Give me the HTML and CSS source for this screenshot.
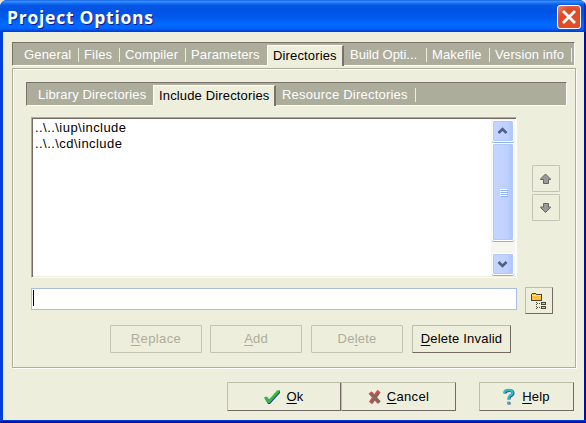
FILE: index.html
```html
<!DOCTYPE html>
<html lang="en">
<head>
<meta charset="utf-8">
<title>Project Options</title>
<link rel="stylesheet" href="styles.css">
</head>
<body>
<div class="window">
  <header class="titlebar">
    <h1>Project Options</h1>
    <button class="close" aria-label="Close"><svg width="22" height="22" viewBox="0 0 22 22"><path d="M6 6L16 16M16 6L6 16" stroke="#fff" stroke-width="2.800" stroke-linecap="square"/></svg></button>
  </header>
  <main class="body">
    <nav class="tabs main-tabs">
      <span class="tab">General</span><span class="tab">Files</span><span class="tab">Compiler</span><span class="tab before">Parameters</span><span class="tab active">Directories</span><span class="tab build">Build Opti...</span><span class="tab">Makefile</span><span class="tab version">Version info</span>
    </nav>
    <section class="page">
      <nav class="tabs sub-tabs">
        <span class="tab lib">Library Directories</span><span class="tab active inc">Include Directories</span><span class="tab res">Resource Directories</span>
      </nav>
      <div class="list-row">
        <div class="list">
          <div class="items"><div>..\..\iup\include</div><div>..\..\cd\include</div></div>
          <div class="scroll">
            <div class="sb"><svg width="20" height="20" viewBox="0 0 20 20"><path d="M5.500 12L9.500 8L13.500 12" fill="none" stroke="#4d6185" stroke-width="2.600"/></svg></div>
            <div class="thumb"><i></i><i></i><i></i><i></i></div>
            <div class="track"></div>
            <div class="sb"><svg width="20" height="20" viewBox="0 0 20 20"><path d="M5.500 8L9.500 12L13.500 8" fill="none" stroke="#4d6185" stroke-width="2.600"/></svg></div>
          </div>
        </div>
        <div class="movers">
          <button class="btn disabled mover"><svg width="12" height="12" viewBox="0 0 12 12"><path d="M5.500 1L10.500 6V6.500H8.500V10.500H3.500V6.500H.5V6Z" fill="#999" stroke="#666"/></svg></button>
          <button class="btn disabled mover"><svg width="12" height="12" viewBox="0 0 12 12"><path d="M5.500 10.500L.5 5.500V5H3.500V1.500H8.500V5H10.500V5.500Z" fill="#999" stroke="#666"/></svg></button>
        </div>
      </div>
      <div class="edit-row">
        <div class="edit"><span class="caret"></span></div>
        <button class="btn browse"><svg width="16" height="16" viewBox="0 0 16 16" shape-rendering="crispEdges"><path d="M1 0H5V1H11V8H0V1H1Z" fill="#4d4538"/><path d="M1 1H5V2H10V7H1Z" fill="#ffc23e"/><path d="M1 2H10V3H1Z" fill="#ffdc83"/><path d="M5.500 9V16M6 10.500H10M6 14.500H10" fill="none" stroke="#4d4538" stroke-dasharray="1 1"/><path d="M10 9H15V12H10ZM10 13H15V16H10Z" fill="#4d4538"/><path d="M11 10H14V11H11ZM11 14H14V15H11Z" fill="#ffc23e"/></svg></button>
      </div>
      <div class="actions">
        <button class="btn disabled replace"><span><u>R</u>eplace</span></button>
        <button class="btn disabled add"><span><u>A</u>dd</span></button>
        <button class="btn disabled delete"><span>De<u>l</u>ete</span></button>
        <button class="btn invalid"><span><u>D</u>elete Invalid</span></button>
      </div>
    </section>
    <footer class="footer">
      <button class="btn ok"><svg width="16" height="16" viewBox="0 0 16 16"><path d="M.5 9L3 8L5.500 11L13 2.500L16 1.500V4L6 15H4Z" fill="#3432a4"/><path d="M0 8.500L2.500 7.500L5 10.500L13 1.500L15.500 1V3L5.500 14H4Z" fill="#32bd3b"/></svg><span><u>O</u>k</span></button>
      <button class="btn cancel"><svg width="14" height="16" viewBox="0 0 14 16"><path d="M2 3.500L11 13.500M11 2L2.500 14" stroke="#d9504b" stroke-width="4"/><path d="M3 4L11.500 13.500M10.500 4L3.500 13.500" stroke="#846760" stroke-width="2.800"/></svg><span><u>C</u>ancel</span></button>
      <button class="btn help"><svg width="12" height="17" viewBox="0 0 12 17"><path d="M2 5.500Q2 2.500 6 2.500Q10 2.500 10 5Q10 7 7.500 8Q6 9 6 11.500M6 14V16.500" fill="none" stroke="#41399d" stroke-width="3"/><path d="M1.500 5Q1.500 2 5.500 2Q9.500 2 9.500 4.500Q9.500 6.500 7 7.500Q5.500 8.500 5.500 11.500M5.500 13.500V16" fill="none" stroke="#2abebd" stroke-width="2.400"/></svg><span><u>H</u>elp</span></button>
    </footer>
  </main>
</div>
</body>
</html>
```
FILE: styles.css
```css
* { box-sizing: border-box; }
body { margin: 0; background: #ece9d8; font: 13px/16px "Liberation Sans", Arial, sans-serif; color: #000; }
h1 { margin: 0; }
button { padding: 0; font: inherit; color: inherit; }
svg { display: block; flex: none; }
.window { width: 586px; height: 423px; background: #003fdc; border-radius: 7px 7px 0 0; overflow: hidden; display: flex; flex-direction: column; box-shadow: inset 0 -2px #00129c; }
.titlebar { height: 32px; flex: none; display: flex; justify-content: space-between; padding: 5px 5px 0 7px; background: linear-gradient(#0650da 0, #3b96ff 1px, #1b75f4 3px, #0758e5 5px, #0053e3 10px, #0057ea 16px, #0067ff 23px, #0068ff 28px, #0050e8 30px, #003bd0 32px); box-shadow: inset -2px 0 #0030c4; }
.titlebar h1 { font: bold 17.5px/24px "Open Sans", "Noto Sans", sans-serif; letter-spacing: .75px; color: #fff; text-shadow: 1px 1px #0a1d8c; white-space: nowrap; }
.close { width: 24px; height: 24px; border: 1px solid #fff; border-radius: 3px; background: radial-gradient(circle at 65% 70%, #e3502a, #dc4a27 60%, #e98973); display: flex; align-items: center; justify-content: center; }
.body { height: 388px; margin: 0 2px 0 3px; padding: 10px 8px 0 9px; background: #eeeedd; border-right: 0; box-shadow: 1px 0 #00129c, 2px 0 #00129c; }
.tabs { display: grid; background: #adad9c; border: 1px solid; border-color: #7b716b #fff #fff #7b716b; color: #fff; }
.main-tabs { width: 563px; height: 24px; grid-template-columns: 66px 41px 66px 81px 77px 83px 63px 82px; }
.tab { position: relative; padding: 4px 0 0 12px; white-space: nowrap; letter-spacing: .15px; }
.main-tabs .tab { padding-left: 5px; }
.main-tabs .tab:first-child { padding-left: 11px; }
.main-tabs .build { padding-left: 6px; letter-spacing: 0; }
.main-tabs .version { letter-spacing: .1px; }
.tab:not(.active):not(.before):not(.lib)::after { content: ""; position: absolute; right: 0; top: 5px; width: 1px; height: 14px; background: #eeeedd; }
.tabs .active { margin: 2px 0 -1px; padding: 2px 0 0 5px; background: #eeeedd; border: solid; border-width: 1px 2px 0 1px; border-color: #fff #7b716b #fff #fff; color: #000; }
.page { width: 564px; height: 300px; margin-top: 2px; padding: 13px 7px 0 13px; border: 1px solid #adad9c; box-shadow: inset 1px 1px #fff, 1px 1px #fff; }
.sub-tabs { width: 541px; height: 24px; grid-template-columns: 126px 123px 140px; }
.sub-tabs .tab:first-child { padding-left: 11px; }
.sub-tabs .res { padding-left: 6px; letter-spacing: .22px; }
.list-row { display: flex; margin: 11px 0 0 5px; gap: 15px; }
.list { width: 486px; height: 161px; background: #fff; border: 1px solid; border-color: #adad9c #fff #fff #adad9c; display: flex; justify-content: space-between; box-shadow: inset 1px 1px #736963, inset 0 -1px #eeeedd; }
.items { padding: 2px 0 0 3px; letter-spacing: .45px; }
.scroll { width: 24px; height: 157px; margin: 1px 1px 0 0; padding-top: 1px; background: #f6f5ee; display: flex; flex-direction: column; align-items: center; }
.sb, .thumb { width: 22px; background: linear-gradient(90deg, #c5d5ff, #bfd1ff 70%, #a9c5f6); border: 1px solid #fff; box-shadow: inset 0 0 0 1px #b3c9f5, 0 1px #8cb0e8; border-radius: 2px; flex: none; }
.sb { height: 22px; display: flex; justify-content: center; align-items: center; }
.sb:last-child { margin-bottom: 1px; }
.thumb { height: 98px; margin-top: 1px; display: flex; flex-direction: column; justify-content: center; align-items: center; gap: 1px; }
.thumb i { width: 7px; height: 1px; background: #fff; box-shadow: 1px 1px #8cb0f8; }
.track { flex: 1; }
.movers { display: flex; flex-direction: column; gap: 2px; padding-top: 48px; }
.btn { background: #eeeedd; border: 1px solid; border-color: #bdbdad #736963 #736963 #bdbdad; border-radius: 1px; display: flex; align-items: center; justify-content: center; white-space: nowrap; flex: none; letter-spacing: .2px; }
.disabled { border-color: #c4c4b4; color: #adad9c; }
.mover { width: 28px; height: 27px; }
.edit-row { display: flex; gap: 8px; margin: 9px 0 0 5px; }
.edit { width: 486px; height: 22px; margin-top: 1px; border: 1px solid #a9bfe2; background: #fff; padding: 1px; }
.caret { display: block; width: 1px; height: 16px; background: #000; }
.browse { width: 28px; height: 27px; }
.actions { display: flex; margin: 11px 0 0 84px; }
.actions .btn { height: 28px; width: 92px; }
.actions .replace { letter-spacing: .4px; }
.actions .add, .actions .delete { margin-left: 8px; }
.actions .delete { margin-left: 9px; }
.actions .invalid { width: 99px; margin-left: 9px; }
.footer { display: flex; margin: 14px 0 0 215px; }
.footer .btn { height: 29px; }
.ok { width: 114px; gap: 6px; }
.cancel { width: 115px; gap: 5px; letter-spacing: .35px; }
.help { width: 95px; gap: 7px; }
.footer .help { margin-left: 23px; }
u { text-underline-offset: 2px; text-decoration-thickness: 1px; }
```
